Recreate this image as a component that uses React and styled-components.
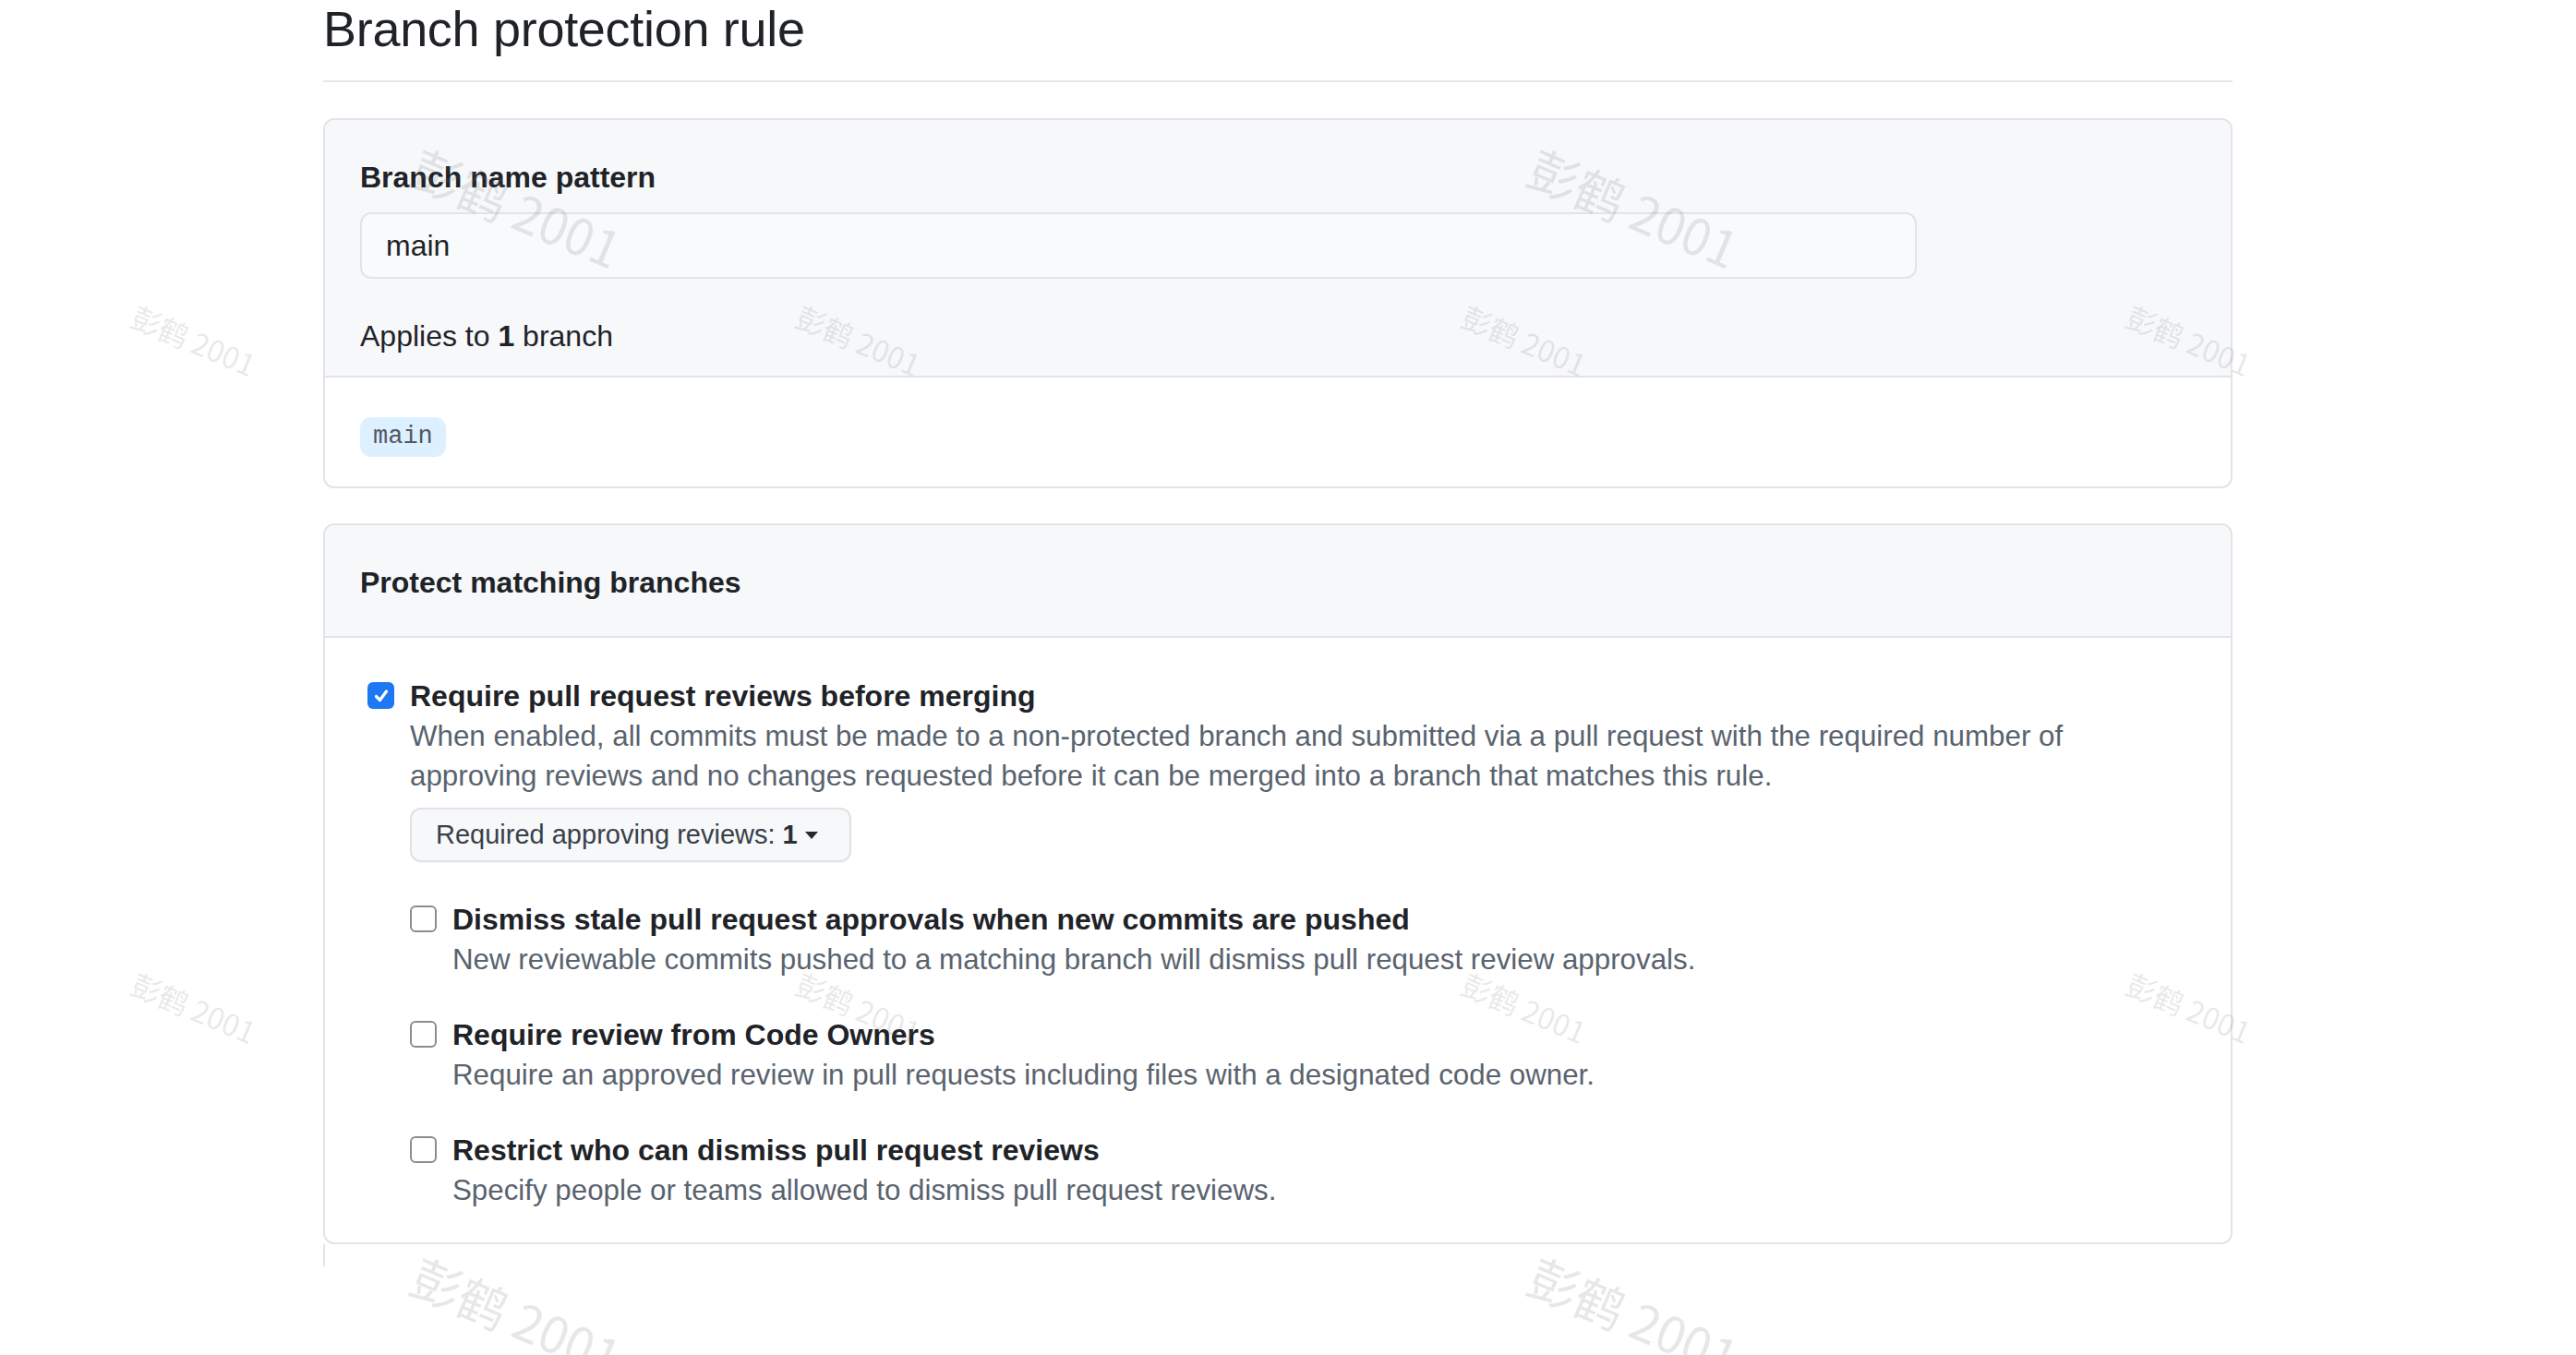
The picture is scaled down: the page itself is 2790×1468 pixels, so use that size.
import React from "react";
import styled, { createGlobalStyle } from "styled-components";

const GlobalStyle = createGlobalStyle`
  html, body {
    margin: 0;
    padding: 0;
    background: #ffffff;
    overflow: hidden;
  }
  body {
    font-family: "Liberation Sans", Arial, "Noto Sans CJK SC", sans-serif;
    color: #1f2328;
  }
  * { box-sizing: border-box; }
`;

const Page = styled.div`
  position: relative;
  width: 2790px;
  height: 1468px;
  overflow: hidden;
`;

const Container = styled.main`
  width: 2068px;
  margin-left: 350px;
  padding-top: 4px;
  display: flex;
  flex-direction: column;
`;

const Title = styled.h2`
  margin: 0;
  font-size: 54px;
  line-height: 54px;
  font-weight: 400;
  color: #1f2328;
  letter-spacing: -0.3px;
`;

const Rule = styled.hr`
  margin: 29px 0 0;
  border: 0;
  height: 2px;
  background: #e4e7ea;
`;

const Box = styled.section`
  margin-top: ${(p) => p.$gap}px;
  border: 2px solid #e1e4e8;
  border-radius: 12px;
  overflow: hidden;
  background: #ffffff;
`;

const BoxHeader = styled.div`
  background: #f6f8fa;
  border-bottom: 2px solid #e1e4e8;
  padding: ${(p) => p.$top}px 38px ${(p) => p.$bottom}px;
  display: flex;
  flex-direction: column;
`;

const FieldLabel = styled.label`
  font-size: 32px;
  line-height: 48px;
  font-weight: 700;
  color: #1f2328;
`;

const TextInput = styled.input`
  margin-top: 14px;
  width: 1686px;
  height: 72px;
  padding: 0 26px;
  border: 2px solid #e1e4e8;
  border-radius: 12px;
  background: #f9fafb;
  font-family: inherit;
  font-size: 32px;
  color: #1f2328;
  outline: none;
`;

const Applies = styled.div`
  margin-top: 38px;
  font-size: 32px;
  line-height: 48px;
  color: #1f2328;
  b { font-weight: 700; }
`;

const BoxBody = styled.div`
  padding: ${(p) => p.$pad};
  display: flex;
  flex-direction: column;
  align-items: flex-start;
`;

const BranchTag = styled.code`
  display: inline-block;
  padding: 0 14px;
  height: 43px;
  line-height: 43px;
  border-radius: 12px;
  background: #ddf0ff;
  color: #4f5863;
  font-family: "Liberation Mono", "DejaVu Sans Mono", monospace;
  font-size: 27px;
`;

const SectionTitle = styled.h3`
  margin: 0;
  font-size: 32px;
  line-height: 48px;
  font-weight: 700;
  color: #1f2328;
`;

const Option = styled.div`
  display: flex;
  align-items: flex-start;
  gap: 17px;
`;

const CheckBox = styled.span`
  flex: none;
  width: 29px;
  height: 29px;
  margin-top: 7px;
  border-radius: 6px;
  display: flex;
  align-items: center;
  justify-content: center;
  background: ${(p) => (p.$checked ? "#1f78f3" : "#ffffff")};
  border: ${(p) => (p.$checked ? "none" : "2px solid #8a8d91")};
`;

const OptionContent = styled.div`
  display: flex;
  flex-direction: column;
  align-items: flex-start;
`;

const OptionLabel = styled.div`
  font-size: 32px;
  line-height: 44px;
  font-weight: 700;
  color: #1f2328;
`;

const OptionNote = styled.p`
  margin: 0;
  font-size: 31.3px;
  line-height: 43px;
  color: #59636e;
`;

const SelectButton = styled.button`
  margin-top: 13px;
  height: 59px;
  padding: 0 34px 0 26px;
  display: inline-flex;
  align-items: center;
  gap: 8px;
  border: 2px solid #dfe2e6;
  border-radius: 12px;
  background: #f6f8fa;
  box-shadow: 0 1px 0 rgba(31, 35, 40, 0.04);
  font-family: inherit;
  font-size: 29px;
  color: #3a4048;
  b { font-weight: 700; color: #2b3036; }
`;

const Caret = styled.span`
  width: 0;
  height: 0;
  border-left: 7px solid transparent;
  border-right: 7px solid transparent;
  border-top: 8px solid #24292f;
`;

const NestedList = styled.div`
  margin-top: 40px;
  display: flex;
  flex-direction: column;
  gap: 38px;
`;

const Tail = styled.div`
  width: 0;
  height: 24px;
  border-left: 2px solid #e1e4e8;
`;

const Watermark = styled.span`
  position: absolute;
  left: ${(p) => p.$x}px;
  top: ${(p) => p.$y}px;
  transform: translate(-50%, -50%) rotate(23deg);
  font-family: "Noto Sans CJK SC", "Liberation Sans", sans-serif;
  font-size: ${(p) => p.$size}px;
  color: rgba(110, 115, 125, 0.17);
  white-space: nowrap;
  pointer-events: none;
  user-select: none;
`;

const watermarks = [
  { x: 560, y: 224, size: 54 },
  { x: 1770, y: 224, size: 54 },
  { x: 210, y: 368, size: 32 },
  { x: 930, y: 368, size: 32 },
  { x: 1651, y: 368, size: 32 },
  { x: 2371, y: 368, size: 32 },
  { x: 210, y: 1091, size: 32 },
  { x: 930, y: 1091, size: 32 },
  { x: 1651, y: 1091, size: 32 },
  { x: 2371, y: 1091, size: 32 },
  { x: 560, y: 1425, size: 54 },
  { x: 1770, y: 1425, size: 54 },
];

function Check({ checked }) {
  return (
    <CheckBox $checked={checked}>
      {checked && (
        <svg width="20" height="20" viewBox="0 0 20 20">
          <polyline
            points="4.5,10.5 8.5,14.5 15.5,5"
            fill="none"
            stroke="#ffffff"
            strokeWidth="3.2"
            strokeLinecap="round"
            strokeLinejoin="round"
          />
        </svg>
      )}
    </CheckBox>
  );
}

const nested = [
  {
    label: "Dismiss stale pull request approvals when new commits are pushed",
    note: "New reviewable commits pushed to a matching branch will dismiss pull request review approvals.",
  },
  {
    label: "Require review from Code Owners",
    note: "Require an approved review in pull requests including files with a designated code owner.",
  },
  {
    label: "Restrict who can dismiss pull request reviews",
    note: "Specify people or teams allowed to dismiss pull request reviews.",
  },
];

export default function App() {
  return (
    <>
      <GlobalStyle />
      <Page>
        <Container>
          <Title>Branch protection rule</Title>
          <Rule />
          <Box $gap={39}>
            <BoxHeader $top={38} $bottom={19}>
              <FieldLabel htmlFor="pattern">Branch name pattern</FieldLabel>
              <TextInput id="pattern" defaultValue="main" />
              <Applies>
                Applies to <b>1</b> branch
              </Applies>
            </BoxHeader>
            <BoxBody $pad="43px 38px 32px">
              <BranchTag>main</BranchTag>
            </BoxBody>
          </Box>
          <Box $gap={38}>
            <BoxHeader $top={38} $bottom={34}>
              <SectionTitle>Protect matching branches</SectionTitle>
            </BoxHeader>
            <BoxBody $pad="41px 38px 35px 46px">
              <Option>
                <Check checked />
                <OptionContent>
                  <OptionLabel>Require pull request reviews before merging</OptionLabel>
                  <OptionNote>
                    When enabled, all commits must be made to a non-protected branch and submitted via a pull request with the required number of
                    <br />
                    approving reviews and no changes requested before it can be merged into a branch that matches this rule.
                  </OptionNote>
                  <SelectButton type="button">
                    <span>
                      Required approving reviews: <b>1</b>
                    </span>
                    <Caret />
                  </SelectButton>
                  <NestedList>
                    {nested.map((item) => (
                      <Option key={item.label}>
                        <Check />
                        <OptionContent>
                          <OptionLabel>{item.label}</OptionLabel>
                          <OptionNote>{item.note}</OptionNote>
                        </OptionContent>
                      </Option>
                    ))}
                  </NestedList>
                </OptionContent>
              </Option>
            </BoxBody>
          </Box>
          <Tail />
        </Container>
        {watermarks.map((w, i) => (
          <Watermark key={i} $x={w.x} $y={w.y} $size={w.size}>
            彭鹤 2001
          </Watermark>
        ))}
      </Page>
    </>
  );
}
